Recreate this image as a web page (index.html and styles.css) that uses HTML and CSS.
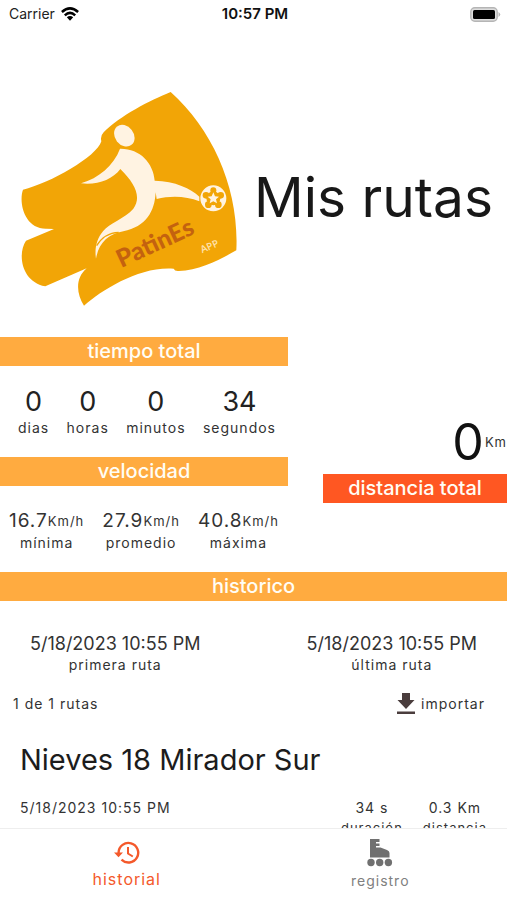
FILE: index.html
```html
<!DOCTYPE html>
<html lang="es">
<head>
<meta charset="utf-8">
<meta name="viewport" content="width=device-width, initial-scale=1">
<title>Mis rutas</title>
<link rel="stylesheet" href="styles.css">
</head>
<body>
<div class="status">
  <div class="carrier"><span>Carrier</span>
    <svg width="18" height="14" viewBox="0 0 18 14" aria-hidden="true"><g fill="none" stroke="#000" stroke-width="2.5"><path d="M.9 5Q9-2.3 17.100 5"/><path d="M3.800 8.300Q9 3.500 14.200 8.300"/></g><path d="M5.800 10.300Q9 7.600 12.200 10.300L9 13.800Z"/></svg>
  </div>
  <span class="clock">10:57 PM</span>
  <div class="battery">
    <svg width="31" height="15" viewBox="0 0 31 15" aria-hidden="true"><rect x=".8" y=".8" width="26.400" height="13.400" rx="4" fill="#ddd" stroke="#b5b5b5" stroke-width="1.400"/><rect x="3" y="3" width="22" height="9" rx="1.500"/><path d="M28.500 5Q32 7.500 28.500 10Z" fill="#b5b5b5"/></svg>
  </div>
</div>
<main class="content">
  <header class="hero">
    <svg class="logo" viewBox="0 0 720 720" role="img" aria-label="PatinEs app">
      <path fill="#f2a506" d="M482 36C420 61 329 108 281 157Q270 168 274 184C261 230 120 310 39 329C25 368 44 448 110 446L132 447L48 482C22 520 33 605 106 619L230 565C195 595 199 641 222 677C278 628 390 558 491 566Q494 574 506 573C570 571 633 537 679 511C688 330 610 150 482 36Z"/>
      <g fill="#fff3e2">
        <ellipse cx="343" cy="167" rx="28" ry="35" transform="rotate(-38 343 167)"/>
        <path d="M330 206C390 205 430 249 434 302C494 303 544 326 568 350L568 364C530 348 482 346 440 357L437 337C434 395 408 440 340 454C294 462 266 490 258 536C253 505 261 475 279 454C297 429 345 416 370 386C396 351 374 309 331 267C306 300 263 315 213 310C266 294 311 257 330 206Z"/>
      </g>
      <path d="M260 497C278 467 300 458 326 457" fill="none" stroke="#f2a506" stroke-width="4"/>
      <g transform="translate(610 355)">
        <circle r="36" fill="#fff3e2" stroke="#fff3e2" stroke-width="6"/>
        <g fill="#f2a506">
          <circle cx="0" cy="-24" r="9"/><circle cx="22" cy="-9" r="10"/><circle cx="15" cy="19" r="10"/><circle cx="-15" cy="19" r="10"/><circle cx="-22" cy="-9" r="10"/><circle r="21"/>
        </g>
        <path fill="#fff3e2" d="M0-18L5-6L17-5L8 3L11 15L0 9L-11 15L-8 3L-17-5L-5-6Z"/>
      </g>
      <text class="logo-name" transform="translate(334 564) rotate(-25)">PatinEs</text>
      <text class="logo-app" transform="translate(577 520) rotate(-24)">APP</text>
    </svg>
    <h1 class="title">Mis rutas</h1>
  </header>

  <section class="summary">
    <div>
      <h2 class="bar">tiempo total</h2>
      <div class="stats times">
        <div class="stat"><span class="big">0</span><span>dias</span></div>
        <div class="stat"><span class="big">0</span><span>horas</span></div>
        <div class="stat"><span class="big">0</span><span>minutos</span></div>
        <div class="stat"><span class="big">34</span><span>segundos</span></div>
      </div>
      <h2 class="bar">velocidad</h2>
      <div class="stats speeds">
        <div class="stat"><span class="value"><span class="mid">16.7</span><span class="unit">Km/h</span></span><span>mínima</span></div>
        <div class="stat"><span class="value"><span class="mid">27.9</span><span class="unit">Km/h</span></span><span>promedio</span></div>
        <div class="stat"><span class="value"><span class="mid">40.8</span><span class="unit">Km/h</span></span><span>máxima</span></div>
      </div>
    </div>
    <div class="distance">
      <div class="total"><span class="huge">0</span><span class="unit">Km</span></div>
      <h2 class="bar accent">distancia total</h2>
    </div>
  </section>

  <section>
    <h2 class="bar">historico</h2>
    <div class="dates">
      <div class="stat"><span class="date">5/18/2023 10:55 PM</span><span>primera ruta</span></div>
      <div class="stat"><span class="date">5/18/2023 10:55 PM</span><span>última ruta</span></div>
    </div>
    <div class="tools">
      <span>1 de 1 rutas</span>
      <button class="import" type="button">
        <svg width="18" height="22" viewBox="0 0 18 22" aria-hidden="true"><path fill="#4a3d3d" d="M5 0H13V7H17.500L9 16L.5 7H5ZM0 18.500H18V21H0Z"/></svg>
        importar
      </button>
    </div>
    <article class="route">
      <h3 class="route-name">Nieves 18 Mirador Sur</h3>
      <div class="route-row">
        <span class="route-date">5/18/2023 10:55 PM</span>
        <div class="stat"><span>34 s</span><span class="small">duración</span></div>
        <div class="stat"><span>0.3 Km</span><span class="small">distancia</span></div>
      </div>
    </article>
  </section>
</main>
<nav class="tabs">
  <a class="tab active" href="#historial">
    <svg width="26" height="24" viewBox="0 0 26 24" aria-hidden="true"><g fill="none" stroke="#f4592b" stroke-width="2.400"><path d="M4.600 13V11.500A9.800 9.800 0 1 1 7.500 18.700"/><path d="M14 6V12.500L18.800 15.500" stroke-width="2"/></g><path fill="#f4592b" d="M0 11.500H9L4.500 16.200Z"/></svg>
    <span>historial</span>
  </a>
  <a class="tab" href="#registro">
    <svg width="26" height="28" viewBox="0 0 26 28" aria-hidden="true"><g fill="#707070"><path d="M3 0H12.500V3H9V4.500H12.500V7H9V8.500H13.500L20 11Q22.500 12 22.500 14V18.500H3Z"/><circle cx="4" cy="23.500" r="3.700"/><circle cx="12.700" cy="23.500" r="3.700"/><circle cx="21.400" cy="23.500" r="3.700"/></g></svg>
    <span>registro</span>
  </a>
</nav>
</body>
</html>
```
FILE: styles.css
```css
* { box-sizing: border-box; }
body {
  margin: 0;
  height: 100vh;
  display: flex;
  flex-direction: column;
  overflow: hidden;
  background: #fff;
  color: #333;
  font: 14px/20px Inter, "Liberation Sans", sans-serif;
  letter-spacing: 1px;
}
h1, h2, h3 { margin: 0; font-weight: 400; letter-spacing: 0; }
svg { display: block; flex: none; }

.status {
  display: grid;
  grid-template-columns: 1fr auto 1fr;
  align-items: center;
  height: 28px;
  padding: 0 6px 0 9px;
  color: #222;
  letter-spacing: 0;
}
.carrier { display: flex; align-items: center; gap: 6px; }
.clock { font-size: 15px; font-weight: 600; color: #111; }
.battery { justify-self: end; }

.content { flex: 1; min-height: 0; overflow: hidden; }
.hero {
  display: flex;
  align-items: center;
  gap: 4px;
  padding: 52px 10px 17px;
}
.logo { width: 240px; }
.logo-name { font: 900 74px Lato, sans-serif; letter-spacing: 0; fill: #c4620f; }
.logo-app { font: 600 30px "Open Sans", sans-serif; letter-spacing: 0; fill: #ffe2ad; }
.title { padding-bottom: 6px; font-size: 55px; line-height: 64px; color: #181818; white-space: nowrap; }

.bar {
  background: #ffab40;
  color: #fffdf5;
  font-size: 20px;
  font-weight: 500;
  line-height: 29px;
  text-align: center;
}
.accent { background: #ff5722; }

.summary {
  display: grid;
  grid-template-columns: minmax(0, 288fr) minmax(0, 184fr);
  column-gap: 35px;
}
.stats { display: flex; justify-content: space-around; }
.stat { display: flex; flex-direction: column; align-items: center; white-space: nowrap; }
.times { justify-content: space-between; padding: 20px 12px 19px 18px; }
.speeds { padding: 22px 0 19px; }
.big { font-size: 27px; line-height: 32px; letter-spacing: 0; color: #222; }
.mid { font-size: 19px; line-height: 25px; }
.value { display: flex; align-items: center; }
.unit { font-size: 13px; }
.distance { align-self: center; padding-top: 8px; }
.total { display: flex; align-items: center; justify-content: flex-end; padding-bottom: 4px; }
.huge { font-size: 50px; line-height: 56px; color: #111; }

.dates { display: flex; justify-content: space-between; padding: 32px 30px 0; }
.date { font-size: 18px; line-height: 22px; letter-spacing: 0; }
.tools {
  display: flex;
  align-items: center;
  justify-content: space-between;
  padding: 18px 22px 0 13px;
}
.import {
  display: flex;
  align-items: center;
  gap: 6px;
  padding: 0;
  border: 0;
  background: none;
  color: inherit;
  font: inherit;
  letter-spacing: inherit;
}
.route { padding: 27px 20px 0; }
.route-name { font-size: 29px; line-height: 36px; color: #1c1c1c; }
.route-row { display: flex; gap: 20px; padding-top: 20px; }
.route-date { flex: 1; }
.small { font-size: 13px; }

.tabs {
  display: grid;
  grid-template-columns: 1fr 1fr;
  height: 72px;
  border-top: 1px solid #eee;
  background: #fff;
}
.tab {
  display: flex;
  flex-direction: column;
  align-items: center;
  gap: 4px;
  padding-top: 10px;
  color: #808080;
  text-decoration: none;
}
.active { padding-top: 12px; color: #f4592b; font-size: 16px; }
```
